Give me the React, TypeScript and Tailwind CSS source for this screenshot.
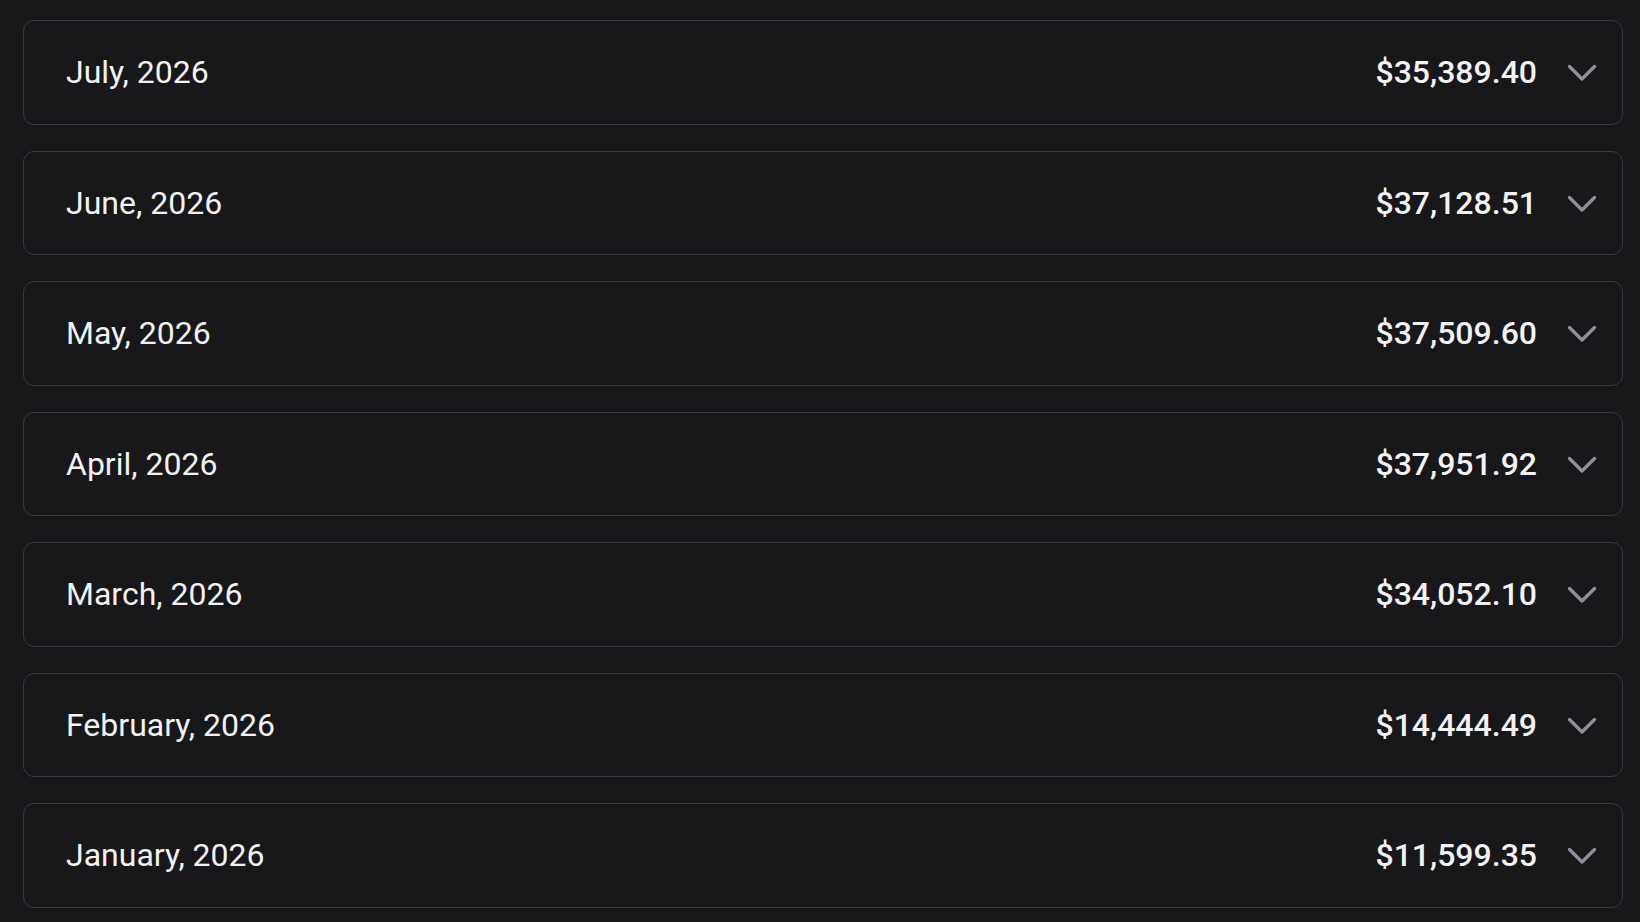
const months = [
  { label: 'July, 2026', total: '$35,389.40' },
  { label: 'June, 2026', total: '$37,128.51' },
  { label: 'May, 2026', total: '$37,509.60' },
  { label: 'April, 2026', total: '$37,951.92' },
  { label: 'March, 2026', total: '$34,052.10' },
  { label: 'February, 2026', total: '$14,444.49' },
  { label: 'January, 2026', total: '$11,599.35' },
];

function Chevron() {
  return (
    <svg width="30" height="18" viewBox="0 0 30 18" fill="none" className="shrink-0">
      <polyline
        points="2.5,2.5 15,15 27.5,2.5"
        stroke="#8a919b"
        strokeWidth="3.4"
        strokeLinecap="round"
        strokeLinejoin="round"
      />
    </svg>
  );
}

export default function App() {
  return (
    <div
      className="min-h-screen bg-[#18181b] pt-[20px] pl-[23px] pr-[17px] text-[#f2f2f3]"
      style={{ fontFamily: 'Roboto, "Liberation Sans", sans-serif' }}
    >
      <div className="flex flex-col gap-[26px]">
        {months.map((m) => (
          <button
            key={m.label}
            className="flex h-[104.5px] w-full items-center rounded-[11px] border-[1.5px] border-[#3a3c42] bg-[#18181b] pl-[42px] pr-[25px] text-left"
          >
            <span className="flex-1 text-[32px] leading-none">{m.label}</span>
            <span className="text-[32px] font-medium leading-none">{m.total}</span>
            <span className="ml-[30px] flex items-center pt-[2px]">
              <Chevron />
            </span>
          </button>
        ))}
      </div>
    </div>
  );
}
